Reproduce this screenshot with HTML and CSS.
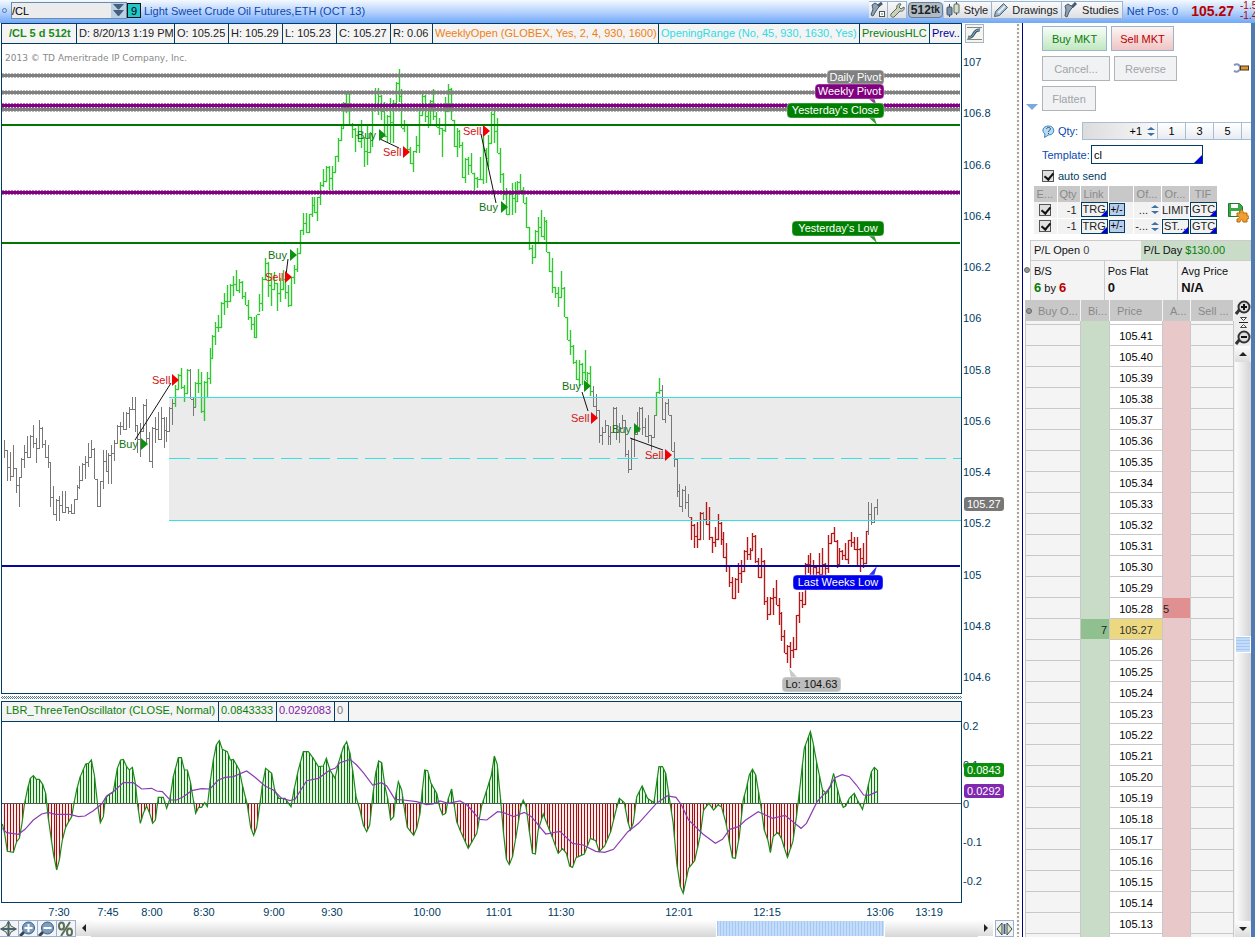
FILE: index.html
```
<!DOCTYPE html>
<html lang="en">
<head>
    <meta charset="UTF-8">
    <meta name="viewport" content="width=device-width, initial-scale=1.0">
    <title>/CL Light Sweet Crude Oil Futures</title>
    <link rel="stylesheet" href="styles.css">
</head>
<body>
<div class="app">
    <header class="topbar">
        <span class="link-dot"></span>
        <div class="symbol">
            <input type="text" value="/CL" aria-label="Symbol">
            <button class="symbol-drop" aria-label="Symbol list">
                <svg width="15" height="15" viewBox="0 0 15 15"><path d="M2 1h11l-5 5.500h-1zM2 7h11l-5 6h-1z" fill="#44607e"/></svg>
            </button>
        </div>
        <button class="link-badge">9</button>
        <span class="symbol-name">Light Sweet Crude Oil Futures,ETH (OCT 13)</span>
        <div class="tools">
            <button class="tool icon-only" aria-label="Study set">
                <svg width="16" height="16" viewBox="0 0 16 16"><path d="M2 3l3-2 5 3-2 2-2 3-3 5-2-1 2-6z" fill="#8fa3b5" stroke="#465a6c"/><path d="M8 4l4-3" stroke="#465a6c" stroke-width="3"/><rect x="9.500" y="9.500" width="5" height="5" fill="#fff" stroke="#555"/><path d="M11 12h2" stroke="#393"/></svg>
            </button>
            <button class="tool icon-only" aria-label="Settings">
                <svg width="16" height="16" viewBox="0 0 16 16"><path d="M2 12l6-6c-1-3 2-5 4-4l-2 3 2 2 3-2c1 3-2 5-4 4l-6 6c-2 1-4-1-3-3z" fill="#cbd3b4" stroke="#566"/></svg>
            </button>
            <button class="tool timeframe"><span>512</span>tk</button>
            <button class="tool">
                <svg width="16" height="16" viewBox="0 0 16 16"><path d="M4.500 2v13M11.500 0v13" stroke="#444"/><rect x="2" y="5" width="5" height="8" rx="1" fill="#7694ae" stroke="#456"/><rect x="9" y="2" width="5" height="9" rx="1" fill="#d5dcc0" stroke="#566"/></svg>
                Style
            </button>
            <button class="tool">
                <svg width="16" height="16" viewBox="0 0 16 16"><path d="M1.500 14.500l1-5 8-8 4 4-8 8z" fill="#9cb4c8" stroke="#4d6273"/><path d="M5 11l7-7" stroke="#e4edf4" stroke-width="2"/></svg>
                Drawings
            </button>
            <button class="tool">
                <svg width="16" height="16" viewBox="0 0 16 16"><path d="M2 4l3-2 5 3-2 2-2 3-2 5-2-1 1-6z" fill="#8fa3b5" stroke="#465a6c"/><path d="M9 5l4-4" stroke="#465a6c" stroke-width="3"/></svg>
                Studies
            </button>
        </div>
        <span class="net-pos">Net Pos: 0</span>
        <strong class="last-price">105.27</strong>
        <span class="change">-1.55<br>-1.45%</span>
    </header>

    <div class="workspace">
        <main class="charts">
            <section class="pane price-pane">
                <div class="pane-main">
                    <div class="legend price-legend">
                        <b>/CL 5 d 512t</b>
                        <span>D: 8/20/13 1:19 PM</span>
                        <span>O: 105.25</span>
                        <span>H: 105.29</span>
                        <span>L: 105.23</span>
                        <span>C: 105.27</span>
                        <span>R: 0.06</span>
                        <span class="orange">WeeklyOpen (GLOBEX, Yes, 2, 4, 930, 1600)</span>
                        <span class="cyan">OpeningRange (No, 45, 930, 1630, Yes)</span>
                        <span class="green">PreviousHLC</span>
                        <span class="navy">Prev..</span>
                    </div>
                    <svg class="plot" id="price-plot" viewBox="2 44 959 649" preserveAspectRatio="none"></svg>
                </div>
                <div class="axis price-axis">
                    <span>107</span><span>106.8</span><span>106.6</span><span>106.4</span><span>106.2</span><span>106</span>
                    <span>105.8</span><span>105.6</span><span>105.4</span><span>105.2</span><span>105</span><span>104.8</span><span>104.6</span>
                    <button class="axis-button" aria-label="Scale">
                        <svg width="17" height="17" viewBox="0 0 17 17"><path d="M1 2.500h15M1 14.500h15" stroke="#8a8a70"/><path d="M2 12c7 2 4-8 12-7" fill="none" stroke="#345672" stroke-width="3"/><path d="M2 12c7 2 4-8 12-7" fill="none" stroke="#9db9d0"/></svg>
                    </button>
                    <span class="bubble last-bubble">105.27</span>
                </div>
            </section>

            <div class="hatch"></div>

            <section class="pane study-pane">
                <div class="pane-main">
                    <div class="legend study-legend">
                        <span class="green">LBR_ThreeTenOscillator (CLOSE, Normal)</span>
                        <span class="green">0.0843333</span>
                        <span class="purple">0.0292083</span>
                        <span class="gray">0</span>
                    </div>
                    <svg class="plot" id="study-plot" viewBox="2 722 959 180" preserveAspectRatio="none"></svg>
                </div>
                <div class="axis study-axis">
                    <span>0.2</span><span>0.1</span><span>0</span><span>-0.1</span><span>-0.2</span>
                    <span class="bubble green-bubble">0.0843</span>
                    <span class="bubble purple-bubble">0.0292</span>
                </div>
            </section>

            <svg class="time-axis" id="time-axis"></svg>

            <footer class="chart-scroll">
                <button class="mini" aria-label="Crosshair"><svg width="17" height="16" viewBox="0 0 17 16"><path d="M8.500 0l2.500 5 5.500 3-5.500 3-2.500 5-2.500-5-5.500-3 5.500-3z" fill="#dfe6c8" stroke="#4b6170"/><path d="M8.500 1v14M1 8h15" stroke="#4b6170" stroke-width="2"/></svg></button>
                <button class="mini" aria-label="Zoom in"><svg width="17" height="16" viewBox="0 0 17 16"><path d="M5 11l-4 4" stroke="#345" stroke-width="3"/><circle cx="9.500" cy="7" r="6" fill="#7d9fbd" stroke="#345f82"/><path d="M9.500 3v8M5.500 7h8" stroke="#fff" stroke-width="2"/></svg></button>
                <button class="mini" aria-label="Zoom out"><svg width="17" height="16" viewBox="0 0 17 16"><path d="M5 11l-4 4" stroke="#345" stroke-width="3"/><circle cx="9.500" cy="7" r="6" fill="#7d9fbd" stroke="#345f82"/><path d="M5.500 7h8" stroke="#fff" stroke-width="2"/></svg></button>
                <button class="mini" aria-label="Percent"><svg width="17" height="16" viewBox="0 0 17 16"><ellipse cx="4.500" cy="5" rx="2.500" ry="3.500" fill="none" stroke="#5c6e55" stroke-width="2"/><ellipse cx="12.500" cy="11" rx="2.500" ry="3.500" fill="none" stroke="#5c6e55" stroke-width="2"/><path d="M13 1l-9 14" stroke="#5c6e55" stroke-width="2"/></svg></button>
                <button class="arrow left" aria-label="Scroll left"></button>
                <div class="track"><div class="thumb"></div></div>
                <button class="arrow right" aria-label="Scroll right"></button>
                <button class="mini fit" aria-label="Fit"><svg width="17" height="16" viewBox="0 0 17 16"><path d="M6 2v12l-5-6zM11 2v12l5-6z" fill="#dfe6c8" stroke="#444"/><path d="M8.500 3v10" stroke="#345f82" stroke-width="2"/></svg></button>
            </footer>
        </main>

        <div class="gutter"></div>

        <aside class="panel">
            <div class="order-entry">
                <div class="row">
                    <button class="btn buy">Buy MKT</button>
                    <button class="btn sell">Sell MKT</button>
                </div>
                <div class="row">
                    <button class="btn wide" disabled>Cancel...</button>
                    <button class="btn" disabled>Reverse</button>
                    <svg class="wrench" width="17" height="11" viewBox="0 0 17 11"><path d="M1 2c5-2 6 1 6 3s-2 5-6 3" fill="none" stroke="#8490c0" stroke-width="2"/><path d="M7 5h9" stroke="#4a3410" stroke-width="5"/><path d="M8 5h7" stroke="#d8983c" stroke-width="3"/></svg>
                </div>
                <div class="row">
                    <button class="btn narrow" disabled>Flatten</button>
                </div>
                <div class="row qty">
                    <svg width="13" height="13" viewBox="0 0 13 13"><path d="M6.500 1c7 0 7 9 0 9l-4 2.500.5-3.500c-4-3-2-8 3.500-8z" fill="#b7dcf2" stroke="#3f80b4"/><path d="M4.500 4c0-2 4-2 4 0 0 1.500-2 1-2 3M6.500 8v1" fill="none" stroke="#234f80"/></svg>
                    <label for="qty">Qty:</label>
                    <span class="spin-box"><input id="qty" type="text" value="+1"><i class="spin"></i></span>
                    <button class="preset">1</button>
                    <button class="preset">3</button>
                    <button class="preset">5</button>
                    <button class="preset"></button>
                </div>
                <div class="row template">
                    <label for="template">Template:</label>
                    <span class="corner"><input id="template" type="text" value="cl"></span>
                </div>
                <div class="row auto">
                    <input type="checkbox" id="auto-send" checked>
                    <label for="auto-send">auto send</label>
                </div>
                <div class="row legs-row">
                    <table class="legs">
                        <thead>
                            <tr><th>E...</th><th>Qty</th><th>Link</th><th></th><th>Of...</th><th>Or...</th><th>TIF</th></tr>
                        </thead>
                        <tbody>
                            <tr>
                                <td class="center"><input type="checkbox" aria-label="Enable leg 1" checked></td>
                                <td class="num">-1</td>
                                <td><div class="corner cell">TRG</div></td>
                                <td><button class="plus-minus">+/-</button></td>
                                <td><div class="offset">...<i class="spin"></i></div></td>
                                <td class="plain">LIMIT</td>
                                <td><div class="corner cell">GTC</div></td>
                            </tr>
                            <tr>
                                <td class="center"><input type="checkbox" aria-label="Enable leg 2" checked></td>
                                <td class="num">-1</td>
                                <td><div class="corner cell">TRG</div></td>
                                <td><button class="plus-minus">+/-</button></td>
                                <td><div class="offset">-...<i class="spin"></i></div></td>
                                <td><div class="corner cell">ST...</div></td>
                                <td><div class="corner cell">GTC</div></td>
                            </tr>
                        </tbody>
                    </table>
                    <svg class="save" width="21" height="20" viewBox="0 0 21 20"><path d="M.5.500h11l3 3v10H.5z" fill="#3aa845" stroke="#1c7c2a"/><path d="M3 1h7v4H3zM3 8h8v5H3z" fill="#fff"/><path d="M9 10h3c-1-4 4-4 3 0h4v3c3-1 3 3 0 3v3h-4c0-3-3-3-3 0H9v-3c3 0 3-3 0-3z" fill="#f0a030" stroke="#b56a10"/></svg>
                </div>
                <span class="collapse"></span>
            </div>

            <div class="position">
                <span class="dot"></span>
                <div class="pl">
                    <div>P/L Open <span class="dim">0</span></div>
                    <div class="pl-day">P/L Day <span class="green">$130.00</span></div>
                </div>
                <div class="stats">
                    <div>B/S<p><b class="green">6</b> by <b class="red">6</b></p></div>
                    <div>Pos Flat<p><b>0</b></p></div>
                    <div>Avg Price<p><b>N/A</b></p></div>
                </div>
            </div>

            <div class="ladder-wrap">
                <table class="ladder">
                    <thead>
                        <tr><th><span class="dot"></span>Buy O...</th><th>Bi...</th><th>Price</th><th>A...</th><th>Sell ...</th></tr>
                    </thead>
                    <tbody id="ladder"></tbody>
                </table>
                <div class="ladder-side">
                    <svg width="16" height="46" viewBox="0 0 16 46"><path d="M5 9l-4 5M5 39l-4 5" stroke="#333" stroke-width="3"/><circle cx="9" cy="7" r="5.500" fill="#ddd" stroke="#333" stroke-width="2"/><circle cx="9" cy="37" r="5.500" fill="#ddd" stroke="#333" stroke-width="2"/><path d="M9 4v6M6 7h6M6 37h6" stroke="#111" stroke-width="2"/><path d="M4 22.500h9" stroke="#222"/><path d="M5.500 17.500h6l-3 3zM5.500 27.500h6l-3-3z" fill="#fff" stroke="#444"/></svg>
                    <button class="arrow up" aria-label="Scroll up"></button>
                    <div class="v-track"><div class="v-thumb"></div></div>
                    <button class="arrow down" aria-label="Scroll down"></button>
                </div>
            </div>
        </aside>
        <div class="edge"></div>
    </div>
</div>
<script src="script.js"></script>
</body>
</html>
```
FILE: styles.css
```
* {
    box-sizing: border-box;
}

body {
    margin: 0;
    font-family: "Liberation Sans", Arial, sans-serif;
    font-size: 11px;
    line-height: 14px;
    color: #222;
    background: #fff;
    overflow: hidden;
}

button, input {
    font: inherit;
    margin: 0;
    padding: 0;
    border-radius: 0;
}

svg {
    display: block;
    flex: none;
}

.app {
    display: flex;
    flex-direction: column;
    height: 100vh;
}

.green { color: #0a7d0a; }
.red { color: #b80000; }
.navy { color: #0000a0; }
.orange { color: #f08010; }
.cyan { color: #30dce4; }
.purple { color: #8020a8; }
.gray { color: #777; }

/* top bar */
.topbar {
    display: flex;
    flex: none;
    height: 23px;
    padding: 1px 0 0 2px;
    background: linear-gradient(#f4f9ff, #b9d4fc 50%, #70a8f8);
    overflow: hidden;
    white-space: nowrap;
}

.link-dot {
    width: 5px;
    height: 5px;
    margin: 7px 4px 0 0;
    border: 1px solid #4a7ab8;
    border-radius: 50%;
}

.symbol {
    display: flex;
    width: 116px;
    height: 17px;
    margin-top: 1px;
    border: 1px solid #6a8cb0;
    background: #ececec;
}

.symbol input {
    flex: 1;
    min-width: 0;
    border: 0;
    background: none;
    color: #000;
}

.symbol-drop {
    width: 15px;
    border: 0;
    background: #bcd0e4;
}

.link-badge {
    width: 14px;
    height: 15px;
    margin: 2px 3px 0 0;
    border: 1px solid #111;
    background: #20c8c8;
    line-height: 12px;
}

.symbol-name {
    line-height: 21px;
    color: #0c48b0;
}

.tools {
    display: flex;
    height: 18px;
    margin-left: auto;
}

.tool {
    display: flex;
    align-items: center;
    gap: 3px;
    padding: 0 3px 0 1px;
    border: 1px solid #9db4d0;
    border-left-width: 0;
    background: linear-gradient(#fafafa, #dcdfe4);
    color: #222;
}

.tool.icon-only {
    padding: 0 1px;
}

.tool.timeframe {
    gap: 0;
    height: 16px;
    margin: 1px 1px 0;
    padding: 0 2px;
    border: 1px solid #6e7d8c;
    border-radius: 4px;
    background: #aebac6;
    font-weight: bold;
    font-size: 10px;
}

.timeframe span {
    font-size: 12px;
}

.net-pos {
    margin: 0 13px 0 4px;
    line-height: 21px;
    color: #0c48b0;
}

.last-price {
    font-size: 14px;
    line-height: 21px;
    color: #b80000;
}

.change {
    width: 15px;
    margin-left: 6px;
    overflow: hidden;
    font-size: 10px;
    line-height: 10px;
    color: #b80000;
}

/* charts */
.workspace {
    display: flex;
    flex: 1;
    min-height: 0;
}

.charts {
    display: flex;
    flex: 1;
    flex-direction: column;
    min-width: 0;
    padding-left: 1px;
}

.pane {
    display: flex;
}

.price-pane {
    flex: 1;
    min-height: 0;
}

.study-pane {
    height: 202px;
}

.pane-main {
    display: flex;
    flex: 1;
    flex-direction: column;
    min-width: 0;
    border: 1px solid #003c64;
}

.legend {
    display: grid;
    flex: none;
    height: 20px;
    border-bottom: 1px solid #003c64;
    background: #f4f4f4;
    line-height: 18px;
    white-space: nowrap;
    overflow: hidden;
}

.price-legend {
    grid-template-columns: 75px 98px 54px 54px 54px 54px 42px 226px 201px 70px 1fr;
}

.study-legend {
    grid-template-columns: 217px 58px 58px 14px 1fr;
    line-height: 17px;
}

.legend > * {
    padding-left: 2px;
    overflow: hidden;
    border-right: 1px solid #003c64;
}

.price-legend > :first-child {
    padding-left: 7px;
}

.study-legend > :first-child {
    padding-left: 4px;
}

.price-legend b {
    color: #1a8a1a;
}

.price-legend > :last-child {
    border-right: 0;
}

.plot {
    flex: 1;
    width: 100%;
    min-height: 0;
}

.copyright {
    font-family: "DejaVu Sans", Verdana, sans-serif;
    font-size: 9px;
}

.axis {
    position: relative;
    display: flex;
    flex: none;
    flex-direction: column;
    justify-content: space-between;
    width: 52px;
    padding-left: 1px;
    color: #003c64;
}

.price-axis {
    padding-top: 32px;
    padding-bottom: 10px;
}

.study-axis {
    padding-top: 18px;
    padding-bottom: 15px;
}

.axis-button {
    position: absolute;
    top: 1px;
    left: 3px;
    border: 1px solid #a8b4c4;
    background: #f4f4f0;
}

.bubble {
    position: absolute;
    left: 2px;
    padding: 0 3px;
    border-radius: 3px;
    color: #fff;
}

.last-bubble {
    top: 474px;
    background: #777;
}

.green-bubble {
    top: 62px;
    background: #0a8f0a;
}

.purple-bubble {
    top: 83px;
    background: #8028b0;
}

.hatch {
    height: 7px;
    border: solid #fff;
    border-width: 2px 0;
    background: repeating-conic-gradient(#5c7c8e 0 25%, #fff 0 50%) 0 0 / 2px 2px;
    margin-right: 52px;
}

.time-axis {
    width: 100%;
    height: 17px;
    fill: #003c64;
}

.chart-scroll {
    display: flex;
    height: 17px;
    margin-left: -1px;
}

.mini {
    width: 19px;
    border: 1px solid #9db0cc;
    border-left-width: 0;
    background: #f2f4f8;
    overflow: hidden;
}

.mini.fit {
    margin-left: 2px;
    border-left-width: 1px;
}

.arrow {
    display: flex;
    align-items: center;
    justify-content: center;
    width: 15px;
    height: 16px;
    border: 0;
    background: linear-gradient(#fdfdfd, #dcdcdc);
}

.arrow::before {
    content: "";
    border: 4px solid transparent;
}

.arrow.left::before {
    border-right-color: #222;
    border-left-width: 0;
}

.arrow.right::before {
    border-left-color: #222;
    border-right-width: 0;
}

.arrow.up::before {
    border-bottom-color: #222;
    border-top-width: 0;
}

.arrow.down::before {
    border-top-color: #222;
    border-bottom-width: 0;
}

.track {
    flex: 1;
    background: linear-gradient(#fff, #d6d6d6);
}

.thumb {
    width: 19%;
    height: 100%;
    margin-left: 70.5%;
    border: 1px solid #fff;
    background: repeating-linear-gradient(90deg, #a4c8f4 0 1px, #c4dcfa 1px 3px);
}

.gutter {
    flex: none;
    width: 8px;
    background: radial-gradient(circle, #a8a49c 1px, transparent 1px) 0 0 / 4px 4px #f8f8f6;
    border: solid #fff;
    border-width: 0 2px;
}

/* trading panel */
.panel {
    display: flex;
    flex: none;
    flex-direction: column;
    width: 229px;
    border-left: 1px solid #000080;
    overflow: hidden;
}

.edge {
    flex: none;
    width: 4px;
    background: #4f7ab4;
}

.order-entry {
    position: relative;
    display: flex;
    flex-direction: column;
    height: 217px;
    padding: 3px 0 0 19px;
}

.row {
    display: flex;
    align-items: center;
    gap: 4px;
    margin-bottom: 5px;
}

.btn {
    width: 63px;
    height: 25px;
    border: 1px solid #9ab4cc;
}

.btn.buy {
    width: 65px;
    background: linear-gradient(#f8fdf8, #c0e8c0);
    color: #0a7d0a;
}

.btn.sell {
    background: linear-gradient(#fdf4f4, #f0c4c4);
    color: #b80000;
}

.btn.wide {
    width: 68px;
}

.btn.narrow {
    width: 54px;
}

.btn:disabled {
    border-color: #b0b4b8;
    background: #f1f2f3;
    color: #a0a4a8;
}

.wrench {
    margin-left: 52px;
}

.row label {
    color: #0c48b0;
}

.row.qty {
    height: 18px;
    margin-top: 6px;
    gap: 0;
    overflow: hidden;
}

.qty label {
    flex: none;
    width: 24px;
    margin-left: 3px;
}

.spin-box {
    display: flex;
    flex: none;
    align-items: center;
    width: 76px;
    height: 18px;
    border: 1px solid #a8bcd4;
    background: linear-gradient(90deg, #dcdcdc, #f8f8f8);
}

.spin-box input {
    flex: 1;
    min-width: 0;
    padding-right: 3px;
    border: 0;
    background: none;
    text-align: right;
}

.spin {
    display: flex;
    flex-direction: column;
    align-items: center;
    gap: 3px;
    width: 12px;
}

.spin::before,
.spin::after {
    content: "";
    border: 4px solid transparent;
}

.spin::before {
    border-top: 0;
    border-bottom: 3px solid #3a70a8;
}

.spin::after {
    border-bottom: 0;
    border-top: 3px solid #3a70a8;
}

.preset {
    flex: none;
    width: 28px;
    height: 18px;
    border: 1px solid #a8bcd4;
    border-left-width: 0;
    background: linear-gradient(#fff, #e8ecf2);
}

.row.template {
    height: 19px;
    gap: 0;
}

.template label {
    width: 49px;
}

.corner {
    position: relative;
    border: 1px solid #003c64;
}

.corner::after {
    content: "";
    position: absolute;
    right: 0;
    bottom: 0;
    border: 3px solid #0000e0;
    border-top-color: transparent;
    border-left-color: transparent;
}

.template .corner {
    width: 112px;
    height: 19px;
}

.template .corner::after {
    border-width: 4px;
}

.template input {
    width: 100%;
    height: 17px;
    padding-left: 2px;
    border: 0;
    background: none;
}

.row.auto {
    height: 14px;
    margin-bottom: 3px;
}

.auto label {
    color: #003c64;
}

input[type="checkbox"] {
    appearance: none;
    position: relative;
    display: block;
    width: 12px;
    height: 12px;
    border: 1px solid #555;
    background: #e0e0e0;
}

input[type="checkbox"]:checked::after {
    content: "";
    position: absolute;
    top: 0;
    left: 3px;
    width: 4px;
    height: 7px;
    border: solid #111;
    border-width: 0 2px 2px 0;
    transform: rotate(40deg);
}

.row.legs-row {
    gap: 10px;
    margin: 0 0 0 -8px;
}

.legs {
    width: 184px;
    table-layout: fixed;
    border-collapse: collapse;
    white-space: nowrap;
}

.legs th {
    height: 16px;
    padding: 0 1px 0 0;
    border-right: 1px solid #fff;
    background: #c8c8c8;
    color: #8a8a8a;
    font-weight: normal;
    text-align: center;
}

.legs th:nth-child(1) { width: 23px; }
.legs th:nth-child(2) { width: 23px; }
.legs th:nth-child(3) { width: 28px; }
.legs th:nth-child(5) { width: 28px; }
.legs th:nth-child(6) { width: 28px; }
.legs th:nth-child(7) { width: 28px; }

.legs td {
    height: 16px;
    padding: 0;
    border-right: 1px solid #fff;
    border-bottom: 1px solid #fff;
    background: #f2f2f2;
}

.legs .center input {
    margin: 0 auto;
}

.legs .num {
    padding-right: 3px;
    text-align: right;
}

.cell {
    height: 15px;
    padding-left: 1px;
    line-height: 13px;
    overflow: hidden;
}

.plain {
    overflow: hidden;
}

.plus-minus {
    display: block;
    width: 16px;
    height: 13px;
    border: 1px solid #003c64;
    background: #b8ccec;
    font-size: 10px;
    line-height: 10px;
}

.offset {
    display: flex;
    align-items: center;
    justify-content: flex-end;
    gap: 1px;
}

.save {
    margin-top: 6px;
}

.collapse {
    position: absolute;
    top: 81px;
    left: 3px;
    border: 6px solid transparent;
    border-top-color: #7aa8e0;
    border-bottom: 0;
}

.dot {
    width: 6px;
    height: 6px;
    border: 1px solid #666;
    border-radius: 50%;
    background: #999;
}

.position {
    position: relative;
    margin-left: 7px;
    color: #111;
}

.position > .dot {
    position: absolute;
    top: 27px;
    left: -6px;
}

.pl {
    display: flex;
    border: 1px solid #ccc;
    background: #f4f4f4;
    line-height: 19px;
}

.pl div {
    flex: 1;
    padding-left: 3px;
}

.pl .pl-day {
    background: #c8dcc8;
}

.dim {
    color: #444;
}

.stats {
    display: flex;
    background: #f4f4f4;
}

.stats div {
    flex: 1;
    height: 39px;
    padding: 3px 0 0 3px;
    border-left: 1px solid #ccc;
}

.stats p {
    margin: 3px 0 0;
}

.stats b {
    font-size: 13px;
}

.ladder-wrap {
    display: flex;
    flex: 1;
    min-height: 0;
    padding-left: 2px;
}

.ladder {
    width: 209px;
    align-self: flex-start;
    table-layout: fixed;
    border-collapse: separate;
    border-spacing: 0;
    white-space: nowrap;
}

.ladder th {
    height: 21px;
    padding: 0 0 0 7px;
    border-right: 1px solid #f4f4f4;
    background: #c8c8c8;
    color: #888;
    font-weight: normal;
    text-align: left;
    overflow: hidden;
}

.ladder th:nth-child(1) { width: 56px; padding-left: 1px; }
.ladder th:nth-child(2) { width: 29px; }
.ladder th:nth-child(3) { width: 53px; }
.ladder th:nth-child(4) { width: 28px; }

.ladder th .dot {
    display: inline-block;
    margin: 0 6px 1px 0;
}

.ladder td {
    height: 21px;
    padding: 1px 0 0;
    border-right: 1px solid #c8c8c8;
    border-bottom: 1px solid #c8c8c8;
    background: #f4f4f4;
}

.ladder td:first-child {
    border-left: 1px solid #c8c8c8;
}

.ladder .gap td {
    height: 4px;
    padding: 0;
}

.ladder .bid {
    padding-right: 2px;
    border-color: #c8dcc8;
    background: #c8dcc8;
    border-right-color: #c8c8c8;
    text-align: right;
}

.ladder .price {
    background: #fff;
    color: #000;
    text-align: center;
}

.ladder .ask {
    border-color: #e8c8c8;
    background: #e8c8c8;
    border-right-color: #c8c8c8;
}

.ladder .bid.hit { background: #90c090; }
.ladder .ask.hit { background: #e09090; }
.ladder .price.hit { background: #ecd880; color: #333; }

.ladder-side {
    display: flex;
    flex: 1;
    flex-direction: column;
    padding-left: 1px;
    background: #eee;
}

.v-track {
    flex: 1;
    padding-top: 274px;
    background: linear-gradient(90deg, #fdfdfd, #d4d4d4);
}

.v-thumb {
    height: 17px;
    border: 1px solid #fff;
    background: repeating-linear-gradient(#a4c8f4 0 1px, #c4dcfa 1px 3px);
}
```
FILE: script.js
```
const GRAY = '#777', GREEN = '#2fc82f', RED = '#b41818';
const STEP = 2.9;

// high-low ranges per colour run
const runs = [
    { x: 4, color: GRAY, bars: '440-458 450-481 452-481 445-477 468-493 477-507 458-477 445-468 436-458 435-458 425-448 438-463 420-448 427-448 440-458 445-468 462-507 486-515 499-521 496-521 491-513 491-513 507-514 504-514 499-513 485-499 466-489 463-481 456-479 443-467 440-458 448-479 479-507 481-507 450-489 450-472 453-484 445-484 440-461 425-443 422-435 412-430 412-430 407-428 397-410 397-432 425-453 423-457 404-431 399-443 432-462 427-468 417-443 412-440 407-440 417-448 417-442 407-432 399-425' },
    { x: 175, color: GREEN, bars: '385-407 374-389 368-389 385-402 369-393' },
    { x: 190, color: GRAY, bars: '369-399 398-416' },
    { x: 195, color: GREEN, bars: '382-407 369-393 372-413 381-421 372-397 348-384 335-358 322-345 315-332 302-328 293-315 285-308 284-302 276-296 270-291' },
    { x: 239, color: GREEN, bars: '279-293 281-299 292-305 300-320 317-330 317-338 315-338 294-312 277-311 258-279 262-297 273-306 272-290 283-311 278-302 270-290 278-299 285-307 277-306 265-284 248-272 230-253 213-235 213-233 214-233 197-217 197-213 197-221 182-205 169-187 166-182 166-190 166-190 156-172 138-162 125-141 102-128 94-113 93-125 123-138 128-152 125-142 120-148 137-167 125-165 132-153 110-147 88-110 88-115 95-120 102-137 115-142 98-143 100-143 82-103 69-102 89-128 120-132 125-150 147-164 151-172 136-153 110-153 93-115 95-122 110-128 100-125 89-120 112-127 118-135 128-157 97-132 84-112 88-120 120-147 128-157 130-148 142-178 158-183 157-175 153-173 173-190 177-188 157-180 132-184 148-183 135-167 112-143 108-143 118-153 148-183 173-200 188-215 193-215 183-215 182-213 181-202 174-192 187-203 197-228 227-250 245-264 230-258 217-242 210-237 217-240 220-252 252-272 258-293 287-298 287-307 271-297 287-317 317-340' },
    { x: 570, color: GREEN, bars: '330-355 345-364 360-380 360-386 363-385 350-380 372-387 366-396' },
    { x: 593, color: GRAY, bars: '386-407 394-418 410-443 427-445 420-432 425-445 426-445 407-432 407-440 423-443 415-428 420-457 450-473 438-470 433-457 412-435 407-432 407-435 418-437 415-443 435-450 415-438' },
    { x: 656, color: GREEN, bars: '392-415 378-394' },
    { x: 662, color: GRAY, bars: '385-420 402-423 399-415 415-451 442-467 459-497 484-507 489-512 486-509 494-517' },
    { x: 691, color: RED, bars: '517-540 524-548 522-548 512-540' },
    { x: 703, color: GRAY, bars: '512-540' },
    { x: 706, color: RED, bars: '502-525 507-540 537-553 527-547 514-540 522-545 532-558 543-572 566-587 577-599 578-599 563-593 560-583 550-572 537-560 548-560 533-550 535-563 558-578 548-578 560-605 597-620 597-615 588-615 580-605 598-625 612-641 630-653 645-663 642-668 637-658 615-650 592-623 592-608 563-605 555-573 553-580 560-582 566-582 553-577 548-575 563-580 535-573 533-543 527-542 540-568 548-565 550-560 543-560 540-564 532-547 537-550 537-565 548-572 543-568 531-564' },
    { x: 868, color: GRAY, bars: '502-535 503-525 507-523 499-515' }
];

const bars = [];
runs.forEach(run => {
    run.bars.split(' ').forEach((b, i) => {
        const [high, low] = b.split('-').map(Number);
        bars.push({ x: Math.round(run.x + i * STEP) + 0.5, high, low, color: run.color });
    });
});

function line(x1, y1, x2, y2, color, width = 1, extra = '') {
    return `<line x1="${x1}" y1="${y1}" x2="${x2}" y2="${y2}" stroke="${color}" stroke-width="${width}" ${extra}/>`;
}

function text(x, y, label, color, anchor = 'start') {
    return `<text x="${x}" y="${y}" fill="${color}" text-anchor="${anchor}">${label}</text>`;
}

// thick level with a beaded edge
function beaded(y, color) {
    return `<rect x="2" y="${y - 1}" width="958" height="3" fill="${color}"/>` +
        line(2, y + 0.5, 960, y + 0.5, color, 5, 'stroke-dasharray="2 1" opacity=".55"');
}

function callout(x, y, w, label, color, ink, tail) {
    return `<path d="${tail}" fill="${color}" opacity=".8"/>` +
        `<rect x="${x}" y="${y}" width="${w}" height="15" rx="4" fill="${color}" stroke="#fff" stroke-opacity=".4"/>` +
        text(x + w / 2, y + 11, label, ink, 'middle');
}

function drawPrice() {
    let out = '<g shape-rendering="crispEdges">';
    out += '<rect x="169" y="397" width="792" height="124" fill="#ebebeb"/>';

    let halo = '', body = '';
    bars.forEach((b, i) => {
        const next = bars[i + 1];
        let d = `M${b.x} ${b.high}V${b.low}`;
        if (next) {
            // close tick joins the next bar's open
            const top = Math.max(b.high, next.high);
            const bottom = Math.min(b.low, next.low);
            const close = Math.round((top + bottom) / 2 + (i % 3 - 1) * Math.max(0, bottom - top) * 0.45) + 0.5;
            d += `M${b.x} ${close}H${next.x}`;
        }
        if (b.color !== GRAY) {
            halo += `<path d="${d}" stroke="${b.color}" stroke-width="3" opacity=".18"/>`;
        }
        body += `<path d="${d}" stroke="${b.color}"/>`;
    });
    out += `<g fill="none">${halo}${body}</g>`;

    out += '<rect x="169" y="397" width="792" height="1" fill="#38e0e4"/>';
    out += line(169, 458.5, 961, 458.5, '#38e0e4', 1, 'stroke-dasharray="21 7"');
    out += '<rect x="169" y="520" width="792" height="1" fill="#38e0e4"/>';
    out += beaded(75, '#808080') + beaded(92, '#808080') + beaded(109, '#808080');
    out += beaded(105, '#800080') + beaded(192, '#800080');
    out += line(2, 125, 960, 125, '#007800', 2) + line(2, 243, 960, 243, '#007800', 2);
    out += line(2, 566, 960, 566, '#0808a0', 2);
    out += '</g>';

    [[135, 440, 171, 383], [286, 275, 288, 259], [380, 139, 399, 148],
     [481, 134, 496, 203], [582, 392, 588, 411], [630, 438, 663, 450]]
        .forEach(l => { out += line(...l, '#111'); });

    [['Buy', 119, 444], ['Sell', 152, 380], ['Buy', 268, 255], ['Sell', 265, 277],
     ['Buy', 357, 135], ['Sell', 383, 152], ['Sell', 463, 131], ['Buy', 479, 207],
     ['Buy', 562, 386], ['Sell', 571, 418], ['Buy', 612, 429], ['Sell', 645, 455]]
        .forEach(([side, x, y]) => {
            const buy = side === 'Buy';
            const tip = x + (buy ? 22 : 20);
            out += text(x, y + 4, side, buy ? '#117311' : '#d01414');
            out += `<path d="M${tip} ${y - 6}l7 6-7 6z" fill="${buy ? '#109010' : '#f00000'}"/>`;
        });

    out += callout(827, 70, 57, 'Daily Pivot', '#808080', '#fff', 'M868 84h6l3 8z');
    out += callout(815, 84, 69, 'Weekly Pivot', '#800080', '#fff', 'M868 98h6l3 8z');
    out += callout(787, 103, 97, "Yesterday's Close", '#008000', '#fff', 'M868 117h6l3 8z');
    out += callout(792, 221, 92, "Yesterday's Low", '#008000', '#fff', 'M868 235h6l3 8z');
    out += callout(793, 575, 90, 'Last Weeks Low', '#0000f0', '#fff', 'M868 576h6l3-10z');
    out += callout(782, 677, 59, 'Lo: 104.63', '#bcbcbc', '#111', 'M791 678h7l-9-10z');
    out += '<text x="5" y="61" fill="#888" class="copyright">2013 © TD Ameritrade IP Company, Inc.</text>';
    document.getElementById('price-plot').innerHTML = out;
}

// study curves, stored as x,y on a fine grid; the second half uses a wider column
function decode(left, right) {
    const parse = s => s.split(' ').map(p => p.split(',').map(Number));
    return parse(left).map(([x, y]) => [x / 3, 690 + y / 3])
        .concat(parse(right).map(([x, y]) => [460 + x / 2.8, 690 + y / 3]))
        .sort((a, b) => a[0] - b[0]);
}

const fast = decode(
    '7,402 13,425 22,484 40,487 50,455 58,445 66,400 73,345 82,300 91,265 100,257 109,268 118,268 128,283 137,310 145,385 160,490 170,540 178,510 187,450 197,412 206,395 215,380 223,335 230,300 240,262 257,222 266,220 274,210 283,255 293,345 301,398 310,380 316,325 325,315 340,305 352,235 362,210 370,208 380,230 388,240 397,232 406,280 413,345 421,400 430,370 440,348 449,370 458,400 466,390 475,322 490,322 500,355 510,325 520,260 535,203 544,203 553,240 562,240 571,275 580,330 587,370 596,352 605,352 614,338 622,350 630,280 640,210 649,165 658,152 667,178 682,185 691,210 700,208 718,240 727,285 742,345 752,412 761,436 770,412 780,340 788,280 797,235 815,250 824,300 836,325 855,325 873,350 882,300 895,240 910,185 925,185 940,205 955,230 970,228 979,205 990,240 1005,265 1015,220 1030,172 1040,155 1050,190 1060,255 1068,320 1080,360 1090,405 1100,425 1109,405 1118,320 1127,250 1136,213 1145,218 1155,290 1163,325 1172,390 1181,380 1187,320 1195,275 1205,300 1213,355 1222,412 1232,425 1241,436 1250,415 1260,370 1266,310 1274,240 1283,242 1293,280 1310,310 1320,355 1328,375 1337,370 1345,325 1355,297 1362,340 1370,395',
    '0,420 23,475 47,430 60,350 75,300 88,255 96,198 104,222 112,310 122,430 130,508 138,524 147,500 160,420 170,350 177,330 185,350 195,430 203,490 211,492 219,420 233,372 245,405 258,440 275,490 287,476 298,490 307,528 315,532 325,503 348,492 365,445 380,452 390,485 405,468 422,425 437,360 446,325 460,338 470,395 477,420 485,400 495,320 510,288 525,325 543,338 557,230 567,230 576,250 587,330 597,400 607,520 617,590 625,610 640,535 657,512 672,440 682,360 697,340 710,360 722,345 732,350 745,400 755,460 763,503 771,505 782,440 793,330 803,290 810,255 819,238 828,255 842,345 852,420 862,450 869,488 877,440 890,427 900,445 910,480 917,502 932,455 942,380 952,290 964,175 981,125 988,155 1000,225 1015,300 1026,310 1037,290 1046,250 1055,290 1065,330 1073,352 1080,348 1090,325 1104,310 1115,335 1127,358 1138,310 1152,245 1160,232 1168,240');

const slow = decode(
    '7,415 20,428 55,433 75,418 100,390 125,372 145,367 165,373 210,373 235,380 255,378 280,362 305,342 320,318 340,305 370,278 400,278 425,297 455,295 470,303 487,305 510,330 530,330 550,320 575,302 605,296 630,297 655,270 675,262 700,260 740,243 765,262 795,288 820,300 845,325 870,332 885,328 920,272 955,265 990,240 1005,235 1020,218 1050,208 1070,225 1090,248 1118,285 1145,278 1160,288 1185,328 1210,330 1250,335 1280,344 1300,342 1320,333 1345,340 1370,335',
    '0,333 20,345 55,388 75,390 105,365 120,367 150,380 180,367 200,380 240,432 280,424 315,460 345,465 380,484 405,487 430,478 470,425 500,400 550,340 580,318 605,322 620,345 640,390 680,432 715,460 735,448 755,418 780,410 800,390 835,365 875,385 910,376 955,415 970,400 1000,335 1030,300 1050,263 1070,254 1090,260 1110,285 1130,315 1145,316 1168,305');

function valueAt(points, x) {
    for (let i = 1; i < points.length; i++) {
        const [x0, y0] = points[i - 1];
        const [x1, y1] = points[i];
        if (x <= x1) return y0 + (y1 - y0) * (x - x0) / (x1 - x0 || 1);
    }
    return points[points.length - 1][1];
}

function drawStudy() {
    const zero = 803.5;
    const last = fast[fast.length - 1][0];
    let out = '<g shape-rendering="crispEdges">';
    for (let i = 0; 4.3 + i * STEP <= last + 1; i++) {
        const x = Math.round(4.3 + i * STEP) + 0.5;
        const y = valueAt(fast, x);
        const up = y < zero;
        out += line(x, zero, x, y, up ? '#4ac84a' : '#f08080', 3, 'opacity=".16"');
        out += line(x, zero, x, y, up ? '#107410' : '#a01010');
    }
    out += line(2, zero, 961, zero, '#555') + '</g>';
    out += `<polyline points="${fast.join(' ')}" fill="none" stroke="#1a8a1a" stroke-width="1.2"/>`;
    out += `<polyline points="${slow.join(' ')}" fill="none" stroke="#8a3cb4" stroke-width="1.2"/>`;
    document.getElementById('study-plot').innerHTML = out;
}

function drawTimes() {
    const times = [['7:30', 58], ['7:45', 107], ['8:00', 151], ['8:30', 203], ['9:00', 273], ['9:30', 331],
        ['10:00', 426], ['11:01', 498], ['11:30', 560], ['12:01', 678], ['12:15', 766], ['13:06', 879], ['13:19', 928]];
    document.getElementById('time-axis').innerHTML =
        times.map(([label, x]) => text(x, 13, label, '#003c64', 'middle')).join('');
}

function drawLadder() {
    const row = (bid, price, ask, cls = '') =>
        `<tr class="${cls}"><td></td><td class="bid${bid ? ' hit' : ''}">${bid}</td>` +
        `<td class="price${bid ? ' hit' : ''}">${price}</td><td class="ask${ask ? ' hit' : ''}">${ask}</td><td></td></tr>`;
    let out = row('', '', '', 'gap');
    for (let cents = 10541; cents >= 10513; cents--) {
        out += row(cents === 10527 ? '7' : '', (cents / 100).toFixed(2), cents === 10528 ? '5' : '');
    }
    out += row('', '', '');
    document.getElementById('ladder').innerHTML = out;
}

drawPrice();
drawStudy();
drawTimes();
drawLadder();
```
